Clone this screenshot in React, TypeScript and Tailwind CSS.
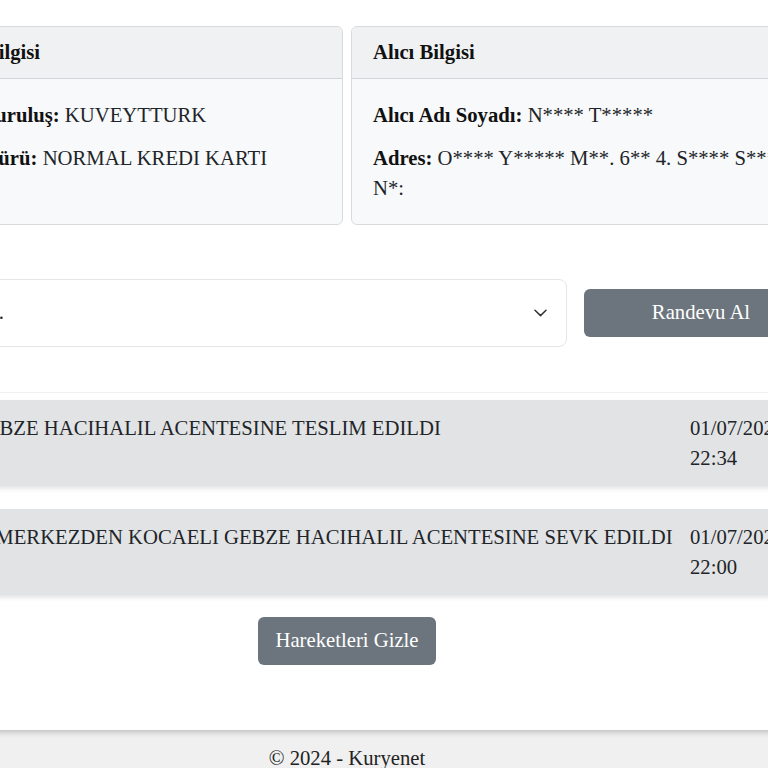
import React from "react";

const serif = { fontFamily: '"Liberation Serif", "Times New Roman", serif' };

function InfoCard({ title, rows }: { title: string; rows: { label: string; value: string }[] }) {
  return (
    <div className="flex flex-col overflow-hidden rounded-[6px] border border-[#d9dadc] bg-[#f8f9fa]">
      <div className="flex h-[52px] items-center border-b border-[#d2d4d7] bg-[#f0f1f2] px-[21px] text-[20.7px] font-bold text-[#111]">
        {title}
      </div>
      <div className="flex flex-col gap-[13px] px-[21px] py-[21px] text-[20.7px] leading-[30px] text-[#212529]">
        {rows.map((r) => (
          <p key={r.label}>
            <b className="text-[#111]">{r.label}</b> {r.value}
          </p>
        ))}
      </div>
    </div>
  );
}

function Movement({ text, date, time }: { text: string; date: string; time: string }) {
  return (
    <div className="flex h-[86px] bg-[#e2e3e5] px-[23px] py-[13px] text-[20.7px] leading-[30px] text-[#212529] shadow-[0_3px_4px_rgba(0,0,0,0.10)]">
      <div className="flex-1 whitespace-nowrap pr-[12px]">{text}</div>
      <div className="w-[128px] shrink-0 whitespace-nowrap">
        <div>{date}</div>
        <div>{time}</div>
      </div>
    </div>
  );
}

export default function App() {
  return (
    <div className="h-[768px] w-[768px] overflow-hidden bg-white" style={serif}>
      <div className="ml-[-253px] w-[1200px]">
        <main className="relative z-10 h-[730px] bg-white shadow-[0_2px_6px_rgba(0,0,0,0.22)]">
          <div className="mx-auto w-[988px] pt-[26px]">
            <div className="grid grid-cols-2 gap-[8px]">
              <InfoCard
                title="Kredi Kartı Bilgisi"
                rows={[
                  { label: "Kart Veren Kuruluş:", value: "KUVEYTTURK" },
                  { label: "Kredi Kartı Türü:", value: "NORMAL KREDI KARTI" },
                ]}
              />
              <InfoCard
                title="Alıcı Bilgisi"
                rows={[
                  { label: "Alıcı Adı Soyadı:", value: "N**** T*****" },
                  { label: "Adres:", value: "O**** Y***** M**. 6** 4. S**** S**** N*:" },
                ]}
              />
            </div>

            <div className="mt-[54px] flex items-center gap-[17px] pr-[23px]">
              <div className="flex h-[68px] flex-1 items-center rounded-[8px] border border-[#e6e6e6] bg-white pl-[25px] pr-[19px] text-[20.7px] text-[#212529]">
                <span className="flex-1 whitespace-nowrap">Tarih Seçiniz...</span>
                <svg width="13" height="8" viewBox="0 0 13 8" fill="none">
                  <path d="M1 1.2 L6.5 6.6 L12 1.2" stroke="#333" strokeWidth="1.5" strokeLinecap="round" strokeLinejoin="round" />
                </svg>
              </div>
              <button className="h-[48px] w-[234px] rounded-[6px] bg-[#6c757d] text-[20.7px] text-white">
                Randevu Al
              </button>
            </div>

            <div className="mt-[45px] border-t border-[#f0f0f0] pt-[7px]">
              <div className="flex flex-col gap-[23px]">
                <Movement
                  text="KOCAELI GEBZE HACIHALIL ACENTESINE TESLIM EDILDI"
                  date="01/07/2024"
                  time="22:34"
                />
                <Movement
                  text="HADIMKÖY MERKEZDEN KOCAELI GEBZE HACIHALIL ACENTESINE SEVK EDILDI"
                  date="01/07/2024"
                  time="22:00"
                />
              </div>
            </div>

            <div className="mt-[22px] flex justify-center">
              <button className="h-[48px] w-[178px] rounded-[6px] bg-[#6c757d] text-[20.7px] text-white">
                Hareketleri Gizle
              </button>
            </div>
          </div>
        </main>
        <footer className="flex h-[60px] justify-center bg-[#f0f0f0] pt-[13px] text-[20.7px] text-[#222]">
          © 2024 - Kuryenet
        </footer>
      </div>
    </div>
  );
}
